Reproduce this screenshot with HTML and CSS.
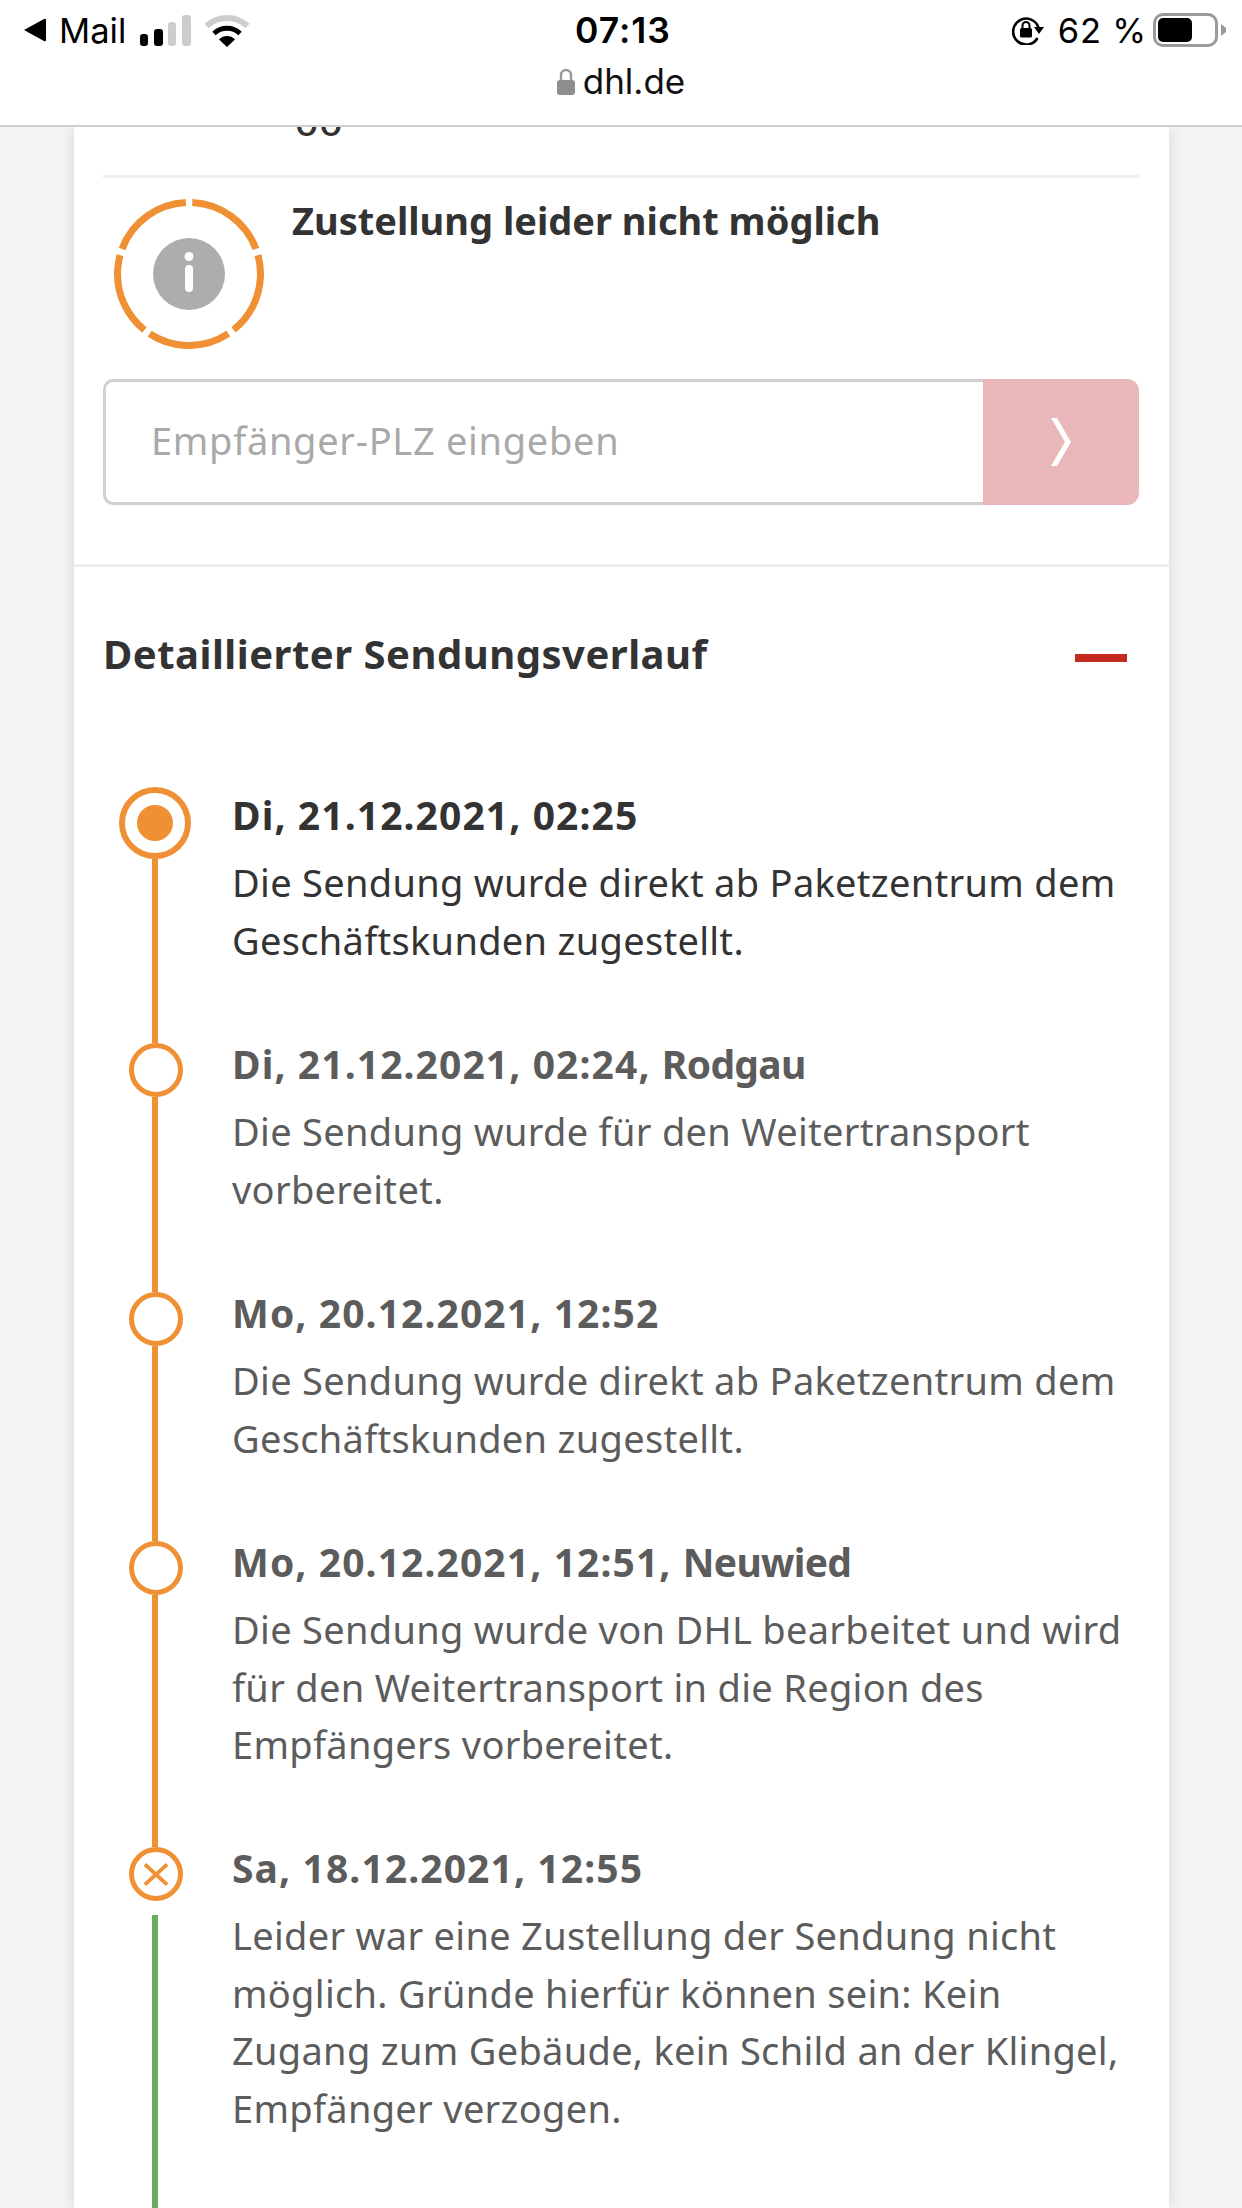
FILE: index.html
```html
<!DOCTYPE html>
<html lang="de">
<head>
<meta charset="utf-8">
<title>DHL Sendungsverfolgung</title>
<link rel="stylesheet" href="styles.css">
</head>
<body>
<div class="screen">
  <header class="topbar">
    <div class="status">
      <div class="status-left">
        <svg class="back-tri" viewBox="0 0 23 24"><path d="M1 12 L21 1 Q23 0 23 2 V22 Q23 24 21 23 Z"/></svg>
        <span class="status-text">Mail</span>
        <svg class="signal" viewBox="0 0 51 31"><rect x="0" y="19" width="8" height="12" rx="3" fill="#000"/><rect x="14" y="14" width="9" height="17" rx="3" fill="#000"/><rect x="28" y="7" width="8" height="24" rx="3" fill="#cdcdcd"/><rect x="42" y="0" width="9" height="31" rx="3" fill="#cdcdcd"/></svg>
        <svg class="wifi" viewBox="0 0 46 33"><path d="M2.500 12 A30 30 0 0 1 43.500 12" fill="none" stroke="#cdcdcd" stroke-width="6"/><path d="M10 19.500 A19 19 0 0 1 36 19.500" fill="none" stroke="#000" stroke-width="5"/><path d="M23 33 L15 25.500 A11 11 0 0 1 31 25.500 Z" fill="#000"/></svg>
      </div>
      <div class="status-time">07:13</div>
      <div class="status-right">
        <svg class="rotlock" viewBox="0 0 33 30"><path d="M26.500 23 A13 13 0 1 1 27.500 12.500" fill="none" stroke="#000" stroke-width="2.600"/><path d="M23 12 L33 12 L28 19 Z" fill="#000"/><rect x="9" y="13" width="12" height="9.500" rx="1.500" fill="#000"/><path d="M11.500 13 V10.500 A3.500 3.500 0 0 1 18.500 10.500 V13" fill="none" stroke="#000" stroke-width="2"/></svg>
        <span class="status-text status-pct">62 %</span>
        <div class="battery"><div class="battery-fill"></div></div>
        <svg class="battery-cap" viewBox="0 0 5 12"><path d="M0 0 L5 4 V8 L0 12 Z" fill="#9a9a9a"/></svg>
      </div>
    </div>
    <div class="address">
      <svg class="lock" viewBox="0 0 18 27"><path d="M4 13 V7 A5 5 0 0 1 14 7 V13" fill="none" stroke="#9a9a9a" stroke-width="2.500"/><rect x="0" y="12" width="18" height="15" rx="3" fill="#8e8e8e"/></svg>
      <span class="address-text">dhl.de</span>
    </div>
  </header>

  <main class="card">
    <section class="status-block">
      <div class="clipped"><span class="clipped-text">oo</span></div>
      <div class="rule"></div>
      <div class="notice">
        <svg class="notice-icon" viewBox="0 0 150 150">
          <circle class="ring" cx="75" cy="75" r="71.500" pathLength="360" stroke-dasharray="66.800 5.200" transform="rotate(-87.400 75 75)"/>
          <circle cx="75" cy="75" r="36" fill="#adadad"/>
          <circle cx="75" cy="57.500" r="4.500" fill="#fff"/>
          <rect x="71" y="66" width="8" height="27" rx="4" fill="#fff"/>
        </svg>
        <h2 class="notice-title">Zustellung leider nicht möglich</h2>
      </div>
      <form class="plz">
        <div class="plz-input">Empfänger-PLZ eingeben</div>
        <div class="plz-button">
          <svg class="chevron" viewBox="0 0 20 48"><path d="M0 0 H6 L20 24 L6 48 H0 L14 24 Z" fill="#fff"/></svg>
        </div>
      </form>
    </section>

    <section class="history">
      <div class="history-head">
        <h2 class="history-title">Detaillierter Sendungsverlauf</h2>
        <div class="minus"></div>
      </div>
      <ol class="timeline">
        <li class="event event-current">
          <div class="marker">
            <div class="dot dot-current"><div class="dot-core"></div></div>
            <div class="line"></div>
          </div>
          <div class="event-body">
            <div class="event-date">Di, 21.12.2021, 02:25</div>
            <p class="event-text">Die Sendung wurde direkt ab Paketzentrum dem<br>Geschäftskunden zugestellt.</p>
          </div>
        </li>
        <li class="event">
          <div class="marker">
            <div class="dot"></div>
            <div class="line"></div>
          </div>
          <div class="event-body">
            <div class="event-date">Di, 21.12.2021, 02:24, <span class="event-place">Rodgau</span></div>
            <p class="event-text">Die Sendung wurde für den Weitertransport<br>vorbereitet.</p>
          </div>
        </li>
        <li class="event">
          <div class="marker">
            <div class="dot"></div>
            <div class="line"></div>
          </div>
          <div class="event-body">
            <div class="event-date">Mo, 20.12.2021, 12:52</div>
            <p class="event-text">Die Sendung wurde direkt ab Paketzentrum dem<br>Geschäftskunden zugestellt.</p>
          </div>
        </li>
        <li class="event event-tall">
          <div class="marker">
            <div class="dot"></div>
            <div class="line"></div>
          </div>
          <div class="event-body">
            <div class="event-date">Mo, 20.12.2021, 12:51, <span class="event-place">Neuwied</span></div>
            <p class="event-text">Die Sendung wurde von DHL bearbeitet und wird<br>für den Weitertransport in die Region des<br>Empfängers vorbereitet.</p>
          </div>
        </li>
        <li class="event event-last">
          <div class="marker">
            <div class="dot dot-x">
              <svg class="x-icon" viewBox="0 0 28 24"><path d="M2 1 L26 23 M26 1 L2 23" fill="none" stroke="#f09035" stroke-width="4"/></svg>
            </div>
            <div class="line line-green"></div>
          </div>
          <div class="event-body">
            <div class="event-date">Sa, 18.12.2021, 12:55</div>
            <p class="event-text">Leider war eine Zustellung der Sendung nicht<br>möglich. Gründe hierfür können sein: Kein<br>Zugang zum Gebäude, kein Schild an der Klingel,<br>Empfänger verzogen.</p>
          </div>
        </li>
      </ol>
    </section>
  </main>
</div>
</body>
</html>
```

FILE: styles.css
```css
* { box-sizing: border-box; }
html, body { margin: 0; padding: 0; background: #f4f4f4; }
body { font-family: "Noto Sans", sans-serif; color: #333; }
.screen { width: 1242px; height: 2208px; overflow: hidden; display: flex; flex-direction: column; }

.topbar { height: 127px; flex: none; background: #fff; border-bottom: 2px solid #cfcfcf; position: relative; z-index: 2; font-family: Inter, sans-serif; }
.status { height: 60px; padding: 0 16px 0 23px; display: grid; grid-template-columns: 1fr auto 1fr; align-items: center; color: #000; }
.status-left { display: flex; align-items: center; }
.status-right { display: flex; align-items: center; justify-content: flex-end; }
.status-text { font-size: 34.500px; letter-spacing: 0; }
.status-pct { letter-spacing: .8px; }
.status-time { font-size: 35.500px; font-weight: 600; letter-spacing: 1px; margin-left: -3px; }
.back-tri { width: 23px; height: 24px; margin-right: 13px; }
.signal { width: 51px; height: 31px; margin-left: 14px; }
.wifi { width: 46px; height: 33px; margin-left: 13px; }
.rotlock { width: 33px; height: 30px; margin-right: 14px; }
.battery { width: 65px; height: 34px; border: 3px solid #9a9a9a; border-radius: 10px; margin-left: 6px; padding: 2px; }
.battery-fill { width: 34px; height: 100%; background: #000; border-radius: 5px; }
.battery-cap { width: 5px; height: 12px; margin-left: 3px; }
.address { display: flex; justify-content: center; align-items: center; gap: 8px; height: 42px; }
.lock { width: 18px; height: 27px; }
.address-text { font-size: 35px; color: #111; }

.card { width: 1095px; margin-left: 74px; flex: 1; min-height: 0; overflow: hidden; background: #fff; box-shadow: 0 0 14px rgba(0,0,0,.12); }
.status-block { padding: 0 30px 0 29px; border-bottom: 3px solid #eeeeee; height: 440px; }
.clipped { height: 48px; overflow: hidden; padding-left: 192px; }
.clipped-text { display: block; font-size: 38px; line-height: 38px; font-weight: 500; margin-top: -25px; letter-spacing: 1px; }
.rule { height: 3px; background: #eeeeee; }
.notice { display: flex; gap: 28px; padding: 21px 0 0 11px; height: 201px; }
.notice-icon { width: 150px; height: 150px; flex: none; }
.ring { fill: none; stroke: #f09035; stroke-width: 7; }
.notice-title { margin: -1px 0 0; font-size: 38px; line-height: 44px; font-weight: 700; color: #333; }
.plz { display: flex; height: 126px; }
.plz-input { flex: 1; border: 3px solid #d0d0d0; border-right: 0; border-radius: 10px 0 0 10px; padding-left: 45px; font-size: 38px; letter-spacing: .7px; line-height: 116px; color: #a9a9a9; }
.plz-button { width: 156px; background: #e9b6b9; border-radius: 0 12px 12px 0; display: flex; align-items: center; justify-content: center; }
.chevron { width: 20px; height: 48px; }

.history { padding: 0 29px; }
.history-head { display: flex; justify-content: space-between; align-items: center; height: 220px; padding: 0 13px 46px 0; }
.history-title { margin: 0; font-size: 40px; letter-spacing: .5px; line-height: 50px; font-weight: 700; color: #333; }
.minus { width: 52px; height: 8px; background: #c52a21; margin-top: 8px; }

.timeline { list-style: none; margin: 0; padding: 0; }
.event { display: grid; grid-template-columns: 104px 1fr; column-gap: 25px; height: 249px; }
.event-current { height: 256px; }
.event-tall { height: 306px; }
.event-last { height: 420px; }
.marker { display: flex; flex-direction: column; align-items: center; }
.dot { width: 54px; height: 54px; flex: none; border: 5px solid #f09035; border-radius: 50%; display: flex; align-items: center; justify-content: center; background: #fff; margin-left: 1px; }
.dot-current { width: 72px; height: 72px; border-width: 6px; margin-left: 0; }
.dot-core { width: 36px; height: 36px; border-radius: 50%; background: #f09035; }
.x-icon { width: 26px; height: 23px; }
.line { width: 6px; flex: 1; background: #f09035; }
.line-green { background: #69ae5e; margin-top: 14px; }
.event-body { margin-top: -2px; }
.event-current .event-body { padding-top: 7px; }
.event-date { font-size: 39px; letter-spacing: 1.100px; line-height: 46px; font-weight: 700; color: #5c5c5c; }
.event-place { letter-spacing: -.7px; }
.event-text { margin: 16px 0 0; font-size: 38px; letter-spacing: .3px; line-height: 57.500px; color: #5c5c5c; }
.event-current .event-date, .event-current .event-text { color: #333; }
```
